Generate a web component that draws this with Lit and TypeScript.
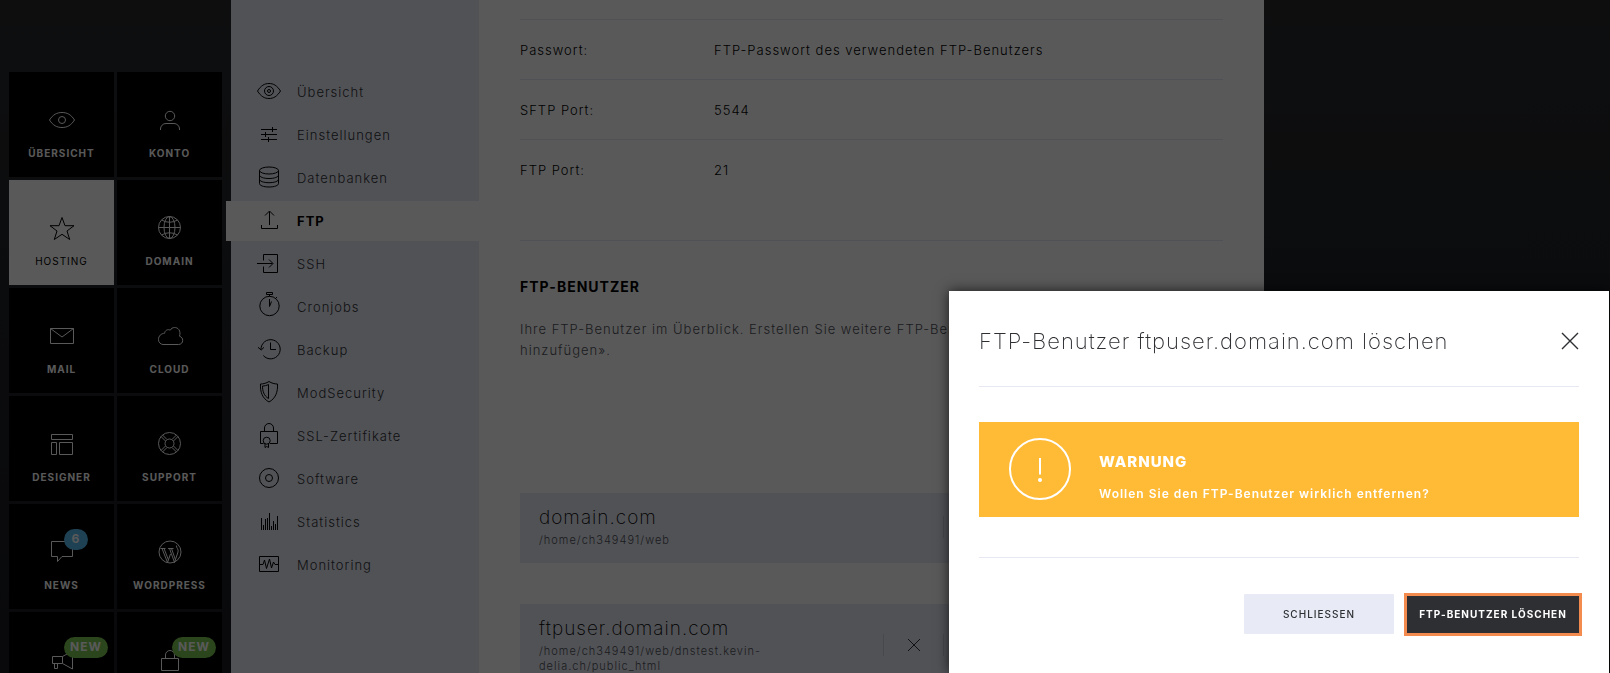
import { LitElement, html, css, svg, nothing } from "lit";
import { customElement } from "lit/decorators.js";
import { classMap } from "lit/directives/class-map.js";

const tileIcons: Record<string, unknown> = {
  eye: svg`<path d="M3.5 16C7 10.5 11 8.5 16 8.5s9 2 12.5 7.5C25 21.5 21 23.5 16 23.5S7 21.5 3.5 16z"/><circle cx="16" cy="16" r="3.5"/>`,
  user: svg`<circle cx="16" cy="12" r="4.7"/><path d="M6.5 26v-1a5.5 5.5 0 0 1 5.5-5.5h8a5.5 5.5 0 0 1 5.5 5.5v1"/>`,
  star: svg`<path d="M16 5.5l3 8.2h9l-7 5.3 2.7 8.5L16 22.3l-7.700 5.200L11 19l-7-5.300h9z"/>`,
  globe: svg`<circle cx="15.5" cy="15.5" r="11"/><ellipse cx="15.5" cy="15.5" rx="5.5" ry="11"/><path d="M15.5 4.500v22M4.500 15.500h22M7.500 8q8 4.500 16 0M7.500 23q8-4.500 16 0"/>`,
  mail: svg`<path d="M4.500 8.500h23v15h-23z M4.500 8.500L16 17l11.500-8.500"/>`,
  cloud: svg`<path d="M9 24.500a4.800 4.800 0 0 1-4.500-5c0-3.500 2.500-6 6.200-6.300 0-2.500 3-4.600 5.500-3 1.800-3.400 6.500-3.500 8.600-.7 1.500 2 1.400 4.500.7 6.700 2.200.8 3.200 2.300 3.200 4.100 0 2.500-1.700 4.200-4.200 4.200z"/>`,
  layout: svg`<path d="M5.500 6.500h21v5h-21zM5.500 14.500h5v12h-5zM13.500 14.500h13v12h-13z"/>`,
  buoy: svg`<circle cx="15.500" cy="15.500" r="11"/><circle cx="15.500" cy="15.500" r="4.500"/><path d="M7 8.500l4.500 4.500M8.500 7l4.500 4.500M24 8.500L19.500 13M22.500 7L18 11.500M7 22.500l4.500-4.500M8.500 24l4.500-4.500M24 22.500L19.500 18M22.500 24L18 19.500"/>`,
  chat: svg`<path d="M5.500 5.500h21v15H16l-4.500 5v-5h-6z"/>`,
  wordpress: svg`<circle cx="16" cy="16" r="11"/><path d="M6.500 12.500h5M14 12.500h5.500M8 12.500l5.500 14 3-8.500M10 12.500l4.500 11.500M15.500 12.500l5 14L24 16c1-3-2-4-1.500-6.500M17.500 12.500l4 11.500"/>`,
  horn: svg`<path d="M6.500 12.500h10v7h-10zM16.500 12.500l10-5.500v18l-10-5.500M8.500 19.500v5h3v-5"/>`,
  lock: svg`<path d="M7.500 14.500h17v12h-17zM11.500 14.500V11a4.500 4.500 0 0 1 9 0v3.500"/>`,
};

const menuIcons: Record<string, unknown> = {
  eye: svg`<path d="M2.500 13C6 7.500 9.500 5.500 14 5.500S22 7.500 25.500 13C22 18.500 18.500 20.500 14 20.500S6 18.500 2.500 13z"/><circle cx="14" cy="13" r="4.500"/><circle cx="14" cy="13" r="1.500"/>`,
  sliders: svg`<path d="M6 8.500h16M6 13.500h16M6 18.500h16M17.500 6v5M10.500 11v5M13.500 16v5"/>`,
  database: svg`<ellipse cx="14" cy="6.500" rx="9.500" ry="3.500"/><path d="M4.500 6.500v13c0 2 4 3.500 9.500 3.500s9.500-1.500 9.500-3.500v-13M4.500 11c0 2 4 3.500 9.500 3.500s9.500-1.500 9.500-3.500M4.500 15.200c0 2 4 3.500 9.500 3.500s9.500-1.500 9.500-3.500"/>`,
  upload: svg`<path d="M14.500 18V4.500M10 8.500l4.500-4.500L19 8.500M6.500 18v3.500h16V18"/>`,
  login: svg`<path d="M8.500 10.500v-6h14v18h-14v-6M2 13.500h15.500M14 9.500l4 4-4 4"/>`,
  stopwatch: svg`<circle cx="14.500" cy="13" r="9.700"/><path d="M11.500-.500h6v2h-6zM14.500 1.500v2M20.500 5.500l1.500-1.500M14.500 13.500v-7.500M14.500 13.500l2-5"/>`,
  history: svg`<path d="M8.300 19.500A9.600 9.600 0 1 0 6 13.500M3 11.300L6.200 14 9 11.300M15.500 6.500v7h5.500"/>`,
  shield: svg`<path d="M14 2.500c2.500 1.600 5.500 2.500 8.500 2.500.5 8-2 14.500-8.500 18C7.500 19.500 5 13 5.500 5c3 0 6-.9 8.500-2.500zM13.500 5.500v14C9 17 7.500 12 7.500 7c2 0 4-.5 6-1.500z"/>`,
  certificate: svg`<path d="M8.500 21.500h-3v-12h17v12H15M9.500 9.500V6a4.500 4.500 0 0 1 9 0v3.500M10 21.500v4l1.700-1 1.800 1v-4"/><circle cx="11.700" cy="18.700" r="3.500"/>`,
  disc: svg`<circle cx="14" cy="13" r="9.500"/><circle cx="14" cy="13" r="3.500"/>`,
  bars: svg`<path d="M6.500 22V10M8.500 22v-5M10.500 22V11M12.500 22V10M14.500 22V5M16.500 22v-4M18.500 22v-9M20.500 22v-6M22.500 22V8"/>`,
  pulse: svg`<path d="M4.500 5.500h19v15h-19zM4.500 13.500h3.500L9.500 9l2 8.500 3-9.500 2 9 2-6 1.500 2.500h3.500"/>`,
};

interface Tile {
  icon: string;
  label?: string;
  active?: boolean;
  badge?: string;
  info?: boolean;
}

const tiles: Tile[] = [
  { icon: "eye", label: "Übersicht" },
  { icon: "user", label: "Konto" },
  { icon: "star", label: "Hosting", active: true },
  { icon: "globe", label: "Domain" },
  { icon: "mail", label: "Mail" },
  { icon: "cloud", label: "Cloud" },
  { icon: "layout", label: "Designer" },
  { icon: "buoy", label: "Support" },
  { icon: "chat", label: "News", badge: "6", info: true },
  { icon: "wordpress", label: "WordPress" },
  { icon: "horn", badge: "NEW" },
  { icon: "lock", badge: "NEW" },
];

const menu = [
  ["eye", "Übersicht"],
  ["sliders", "Einstellungen"],
  ["database", "Datenbanken"],
  ["upload", "FTP"],
  ["login", "SSH"],
  ["stopwatch", "Cronjobs"],
  ["history", "Backup"],
  ["shield", "ModSecurity"],
  ["certificate", "SSL-Zertifikate"],
  ["disc", "Software"],
  ["bars", "Statistics"],
  ["pulse", "Monitoring"],
];

@customElement("main-tiles")
class MainTiles extends LitElement {
  static styles = css`
    :host { display: block; flex: none; padding: 72px 9px 0; }
    .grid { display: grid; grid-template-columns: 105px 105px; grid-auto-rows: 105px; gap: 3px; }
    .tile { position: relative; display: flex; flex-direction: column; align-items: center; gap: 8px;
      box-sizing: border-box; padding-top: 32px; background: #000; color: #fff; text-decoration: none;
      font-size: 10px; line-height: 20px; font-weight: 700; text-transform: uppercase; }
    .tile.active { background: #fff; color: #000; font-weight: 400; }
    .icon { width: 31px; height: 31px; fill: none; stroke: currentColor; stroke-width: 1; }
    .badge { position: absolute; left: 55px; top: 25px; box-sizing: border-box; min-width: 24px; height: 21px;
      padding: 0 6px; border-radius: 11px; background: #7cc850; font-size: 12px; line-height: 20px; font-weight: 700; text-align: center; }
    .badge.info { background: #58bcf0; }
  `;
  render() {
    return html`<nav class="grid" aria-label="Hauptmenü">
      ${tiles.map((t) => html`<a href="#" class=${classMap({ tile: true, active: !!t.active })}>
        <svg class="icon" viewBox="0 0 31 31" aria-hidden="true">${tileIcons[t.icon]}</svg>
        ${t.label ? html`<span>${t.label}</span>` : nothing}
        ${t.badge ? html`<span class=${classMap({ badge: true, info: !!t.info })}>${t.badge}</span>` : nothing}
      </a>`)}
    </nav>`;
  }
}

@customElement("side-menu")
class SideMenu extends LitElement {
  static styles = css`
    :host { display: block; flex: none; width: 248px; padding-top: 72px; background: #e8ebf5; }
    .list { display: flex; flex-direction: column; gap: 3px; }
    .item { display: flex; align-items: center; gap: 14px; height: 40px; padding-left: 24px;
      color: #303135; text-decoration: none; font-size: 13px; line-height: 20px; font-weight: 300; }
    .item.active { margin-left: -5px; padding-left: 29px; background: #fff; color: #000; font-weight: 700; }
    .icon { width: 28px; height: 28px; overflow: visible; fill: none; stroke: #000; stroke-width: 1; }
  `;
  render() {
    return html`<nav class="list" aria-label="Hosting">
      ${menu.map(([icon, label]) => html`<a href="#" class=${classMap({ item: true, active: label === "FTP" })}>
        <svg class="icon" viewBox="0 0 28 28" aria-hidden="true">${menuIcons[icon]}</svg>
        <span>${label}</span>
      </a>`)}
    </nav>`;
  }
}

@customElement("ftp-page")
class FtpPage extends LitElement {
  static styles = css`
    :host { display: block; box-sizing: border-box; flex: 1; max-width: 785px; padding: 19px 41px 0;
      background: #fff; color: #000; font-size: 13px; font-weight: 300; }
    .facts { margin: 0 0 41px; }
    .row { display: flex; align-items: center; box-sizing: border-box; height: 60px; border-top: 1px solid #e6e8f2; }
    .key { flex: none; width: 194px; }
    .value { margin: 0; }
    .users { border-top: 1px solid #e6e8f2; padding-top: 36px; }
    .heading { margin: 0 0 22px; font-size: 14px; line-height: 20px; font-weight: 700; }
    .intro { margin: 0 0 132px; line-height: 21px; color: #50525a; }
    .cards { display: flex; flex-direction: column; gap: 41px; }
    .card { display: flex; align-items: center; background: #e8ebf5; padding: 10px 20px 13px 19px; }
    .text { flex: none; width: 230px; }
    .name { margin: 0; font-size: 19px; line-height: 30px; font-weight: 200; }
    .path { margin: 0 0 2px; font-size: 11px; line-height: 15px; color: #50525a; }
    .actions { display: flex; align-items: center; flex: 1; justify-content: flex-end; }
    .action { width: 60px; height: 22px; padding: 0; border: 0; border-left: 1px solid #cdd0dc; background: none; color: #303135; }
    .glyph { display: block; margin: auto; width: 14px; height: 14px; overflow: visible; fill: none; stroke: currentColor; }
    .wide { width: 260px; }
  `;
  private user(name: string, path: string, removable: boolean) {
    return html`<article class="card">
      <div class="text"><h3 class="name">${name}</h3><p class="path">${path}</p></div>
      <div class="actions">
        ${removable ? html`<button class="action" aria-label="Löschen">
          <svg class="glyph" viewBox="0 0 14 14"><path d="M1 1l12 12M13 1L1 13"/></svg></button>` : nothing}
        <button class="action wide" aria-label="Bearbeiten"></button>
      </div>
    </article>`;
  }
  render() {
    return html`<dl class="facts">
        <div class="row"><dt class="key">Passwort:</dt><dd class="value">FTP-Passwort des verwendeten FTP-Benutzers</dd></div>
        <div class="row"><dt class="key">SFTP Port:</dt><dd class="value">5544</dd></div>
        <div class="row"><dt class="key">FTP Port:</dt><dd class="value">21</dd></div>
      </dl>
      <section class="users">
        <h2 class="heading">FTP-BENUTZER</h2>
        <p class="intro">Ihre FTP-Benutzer im Überblick. Erstellen Sie weitere FTP-Benutzer über «FTP-Benutzer hinzufügen».</p>
        <div class="cards">
          ${this.user("domain.com", "/home/ch349491/web", false)}
          ${this.user("ftpuser.domain.com", "/home/ch349491/web/dnstest.kevin-delia.ch/public_html", true)}
        </div>
      </section>`;
  }
}

@customElement("delete-dialog")
class DeleteDialog extends LitElement {
  static styles = css`
    :host { position: fixed; right: 1px; bottom: 0; box-sizing: border-box; width: 660px; max-width: 100%;
      padding: 0 30px 39px; background: #fff; color: #2e2f33; box-shadow: 0 0 12px rgba(0, 0, 0, 0.7); }
    .head { display: flex; align-items: center; justify-content: space-between; height: 96px; padding-top: 4px;
      box-sizing: border-box; border-bottom: 1px solid #e6e8f2; }
    .title { margin: 0; font-size: 22px; line-height: 30px; font-weight: 200; }
    .close { width: 18px; height: 18px; padding: 0; border: 0; background: none; color: #2e2f33; }
    .cross { display: block; width: 18px; height: 18px; fill: none; stroke: currentColor; stroke-width: 1.4; }
    .alert { display: flex; align-items: flex-start; gap: 28px; box-sizing: border-box; height: 95px; margin: 35px 0 40px;
      padding: 16px 30px; background: #ffbb36; color: #fff; }
    .sign { flex: none; width: 62px; height: 62px; fill: none; stroke: #fff; stroke-width: 2; }
    .body { padding-top: 14px; }
    .strong { margin: 0 0 12px; font-size: 15px; line-height: 20px; font-weight: 800; }
    .message { margin: 0; font-size: 12px; line-height: 20px; font-weight: 600; }
    .foot { display: flex; justify-content: flex-end; align-items: center; gap: 13px; padding-top: 36px; border-top: 1px solid #e6e8f2; }
    .button { height: 40px; width: 150px; padding: 0; border: 0; border-radius: 1px; background: #e8ebf5; color: #2e2f33;
      font: inherit; letter-spacing: inherit; font-size: 10px; font-weight: 500; }
    .button.primary { width: 172px; height: 37px; border-radius: 0; background: #2e2f33; color: #fff; font-weight: 700; outline: 3px solid #f38b4e; }
  `;
  render() {
    return html`<div role="dialog" aria-labelledby="title">
      <header class="head">
        <h2 class="title" id="title">FTP-Benutzer ftpuser.domain.com löschen</h2>
        <button class="close" aria-label="Dialog schliessen"><svg class="cross" viewBox="0 0 18 18"><path d="M1 1l16 16M17 1L1 17"/></svg></button>
      </header>
      <div class="alert">
        <svg class="sign" viewBox="0 0 62 62" aria-hidden="true"><circle cx="31" cy="31" r="30"/><path d="M31 20v16.5"/><circle cx="31" cy="42" r="2" fill="#fff" stroke="none"/></svg>
        <div class="body"><p class="strong">WARNUNG</p><p class="message">Wollen Sie den FTP-Benutzer wirklich entfernen?</p></div>
      </div>
      <footer class="foot">
        <button class="button">SCHLIESSEN</button>
        <button class="button primary">FTP-BENUTZER LÖSCHEN</button>
      </footer>
    </div>`;
  }
}

@customElement("app-root")
class AppRoot extends LitElement {
  static styles = css`
    :host { display: block; height: 100vh; overflow: hidden; font-family: Inter, "Open Sans", sans-serif;
      letter-spacing: 1px; background: linear-gradient(#282a2d, #1a1b20); }
    .page { display: flex; min-height: 100%; }
    .backdrop { position: fixed; inset: 0; background: rgba(0, 0, 0, 0.65); }
  `;
  render() {
    return html`<div class="page"><main-tiles></main-tiles><side-menu></side-menu><ftp-page></ftp-page></div>
      <div class="backdrop"></div>
      <delete-dialog></delete-dialog>`;
  }
}
